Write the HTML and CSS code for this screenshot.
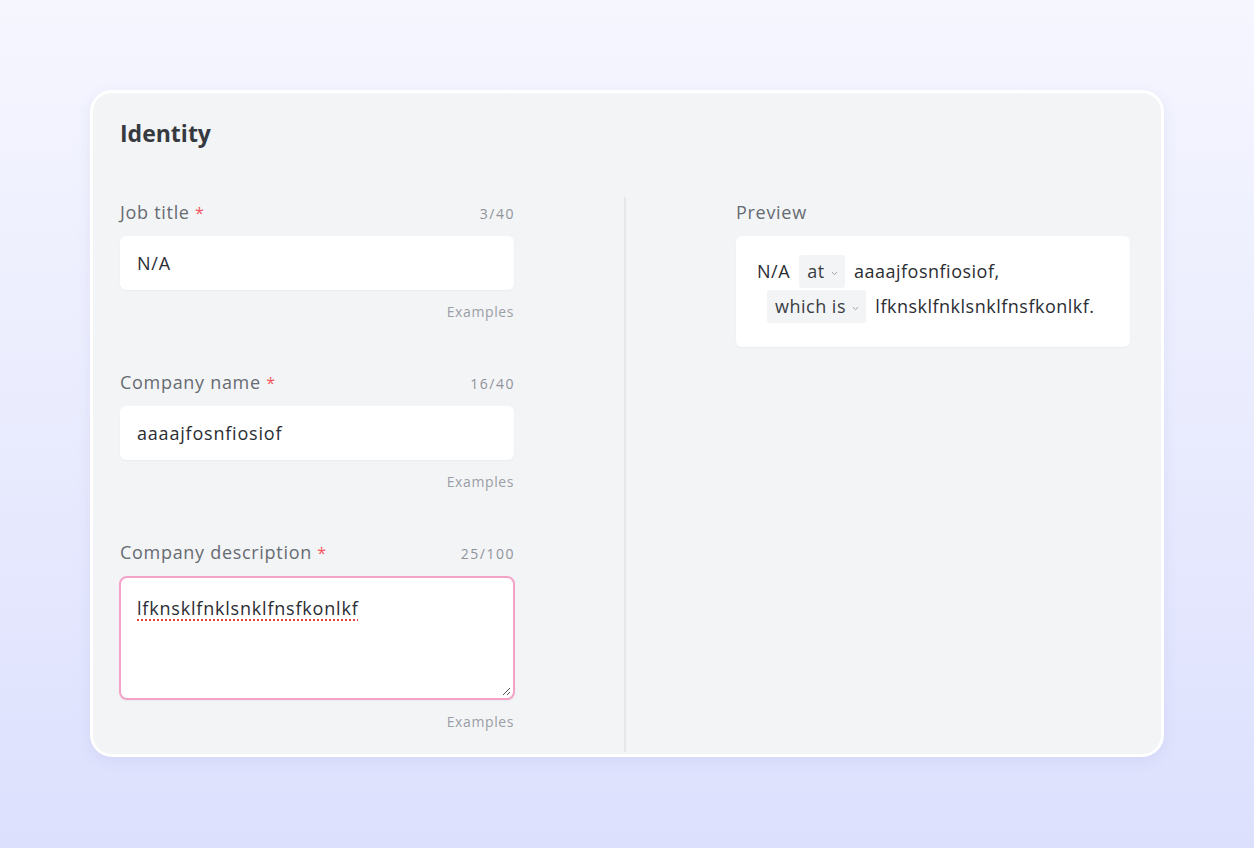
FILE: index.html
```html
<!DOCTYPE html>
<html>
	<head>
		<meta charset="UTF-8">
		<title>Identity</title>
		<link rel="stylesheet" href="styles.css">
	</head>
	<body>
		<div class="card">
			<h2 class="title">Identity</h2>
			<div class="columns">
				<div class="form">
					<div class="field">
						<div class="field-head">
							<label>Job title <span class="req">*</span></label>
							<span class="count">3/40</span>
						</div>
						<div class="input">N/A</div>
						<div class="examples">Examples</div>
					</div>
					<div class="field">
						<div class="field-head">
							<label>Company name <span class="req">*</span></label>
							<span class="count">16/40</span>
						</div>
						<div class="input">aaaajfosnfiosiof</div>
						<div class="examples">Examples</div>
					</div>
					<div class="field">
						<div class="field-head">
							<label>Company description <span class="req">*</span></label>
							<span class="count">25/100</span>
						</div>
						<div class="input area"><span class="typo">lfknsklfnklsnklfnsfkonlkf</span>
							<svg class="grip" width="9" height="9" viewBox="0 0 9 9"><path d="M8 1L1 8M8 5L5 8" stroke="#555" stroke-width="1" fill="none"/></svg>
						</div>
						<div class="examples">Examples</div>
					</div>
				</div>
				<div class="divider"></div>
				<div class="preview">
					<label>Preview</label>
					<div class="preview-box">
						<div class="line">N/A <span class="chip">at <svg width="7" height="5" viewBox="0 0 7 5"><path d="M1 1.2L3.5 3.6L6 1.2" stroke="#9ca3af" stroke-width="1" fill="none"/></svg></span> aaaajfosnfiosiof,</div>
						<div class="line"><span class="chip">which is <svg width="7" height="5" viewBox="0 0 7 5"><path d="M1 1.2L3.5 3.6L6 1.2" stroke="#9ca3af" stroke-width="1" fill="none"/></svg></span> lfknsklfnklsnklfnsfkonlkf.</div>
					</div>
				</div>
			</div>
		</div>
	</body>
</html>
```

FILE: styles.css
```css
* {
	margin: 0;
	padding: 0;
	box-sizing: border-box;
}

body {
	width: 1254px;
	height: 848px;
	background: linear-gradient(180deg, #f5f6fe 0%, #eceefe 40%, #dce0fd 100%);
	font-family: "Open Sans", "Liberation Sans", sans-serif;
	font-variant-ligatures: none;
	padding-top: 90px;
	overflow: hidden;
}

.card {
	width: 1074px;
	height: 667px;
	margin: 0 auto;
	background: #f3f4f6;
	border: 3px solid #ffffff;
	border-radius: 22px;
	box-shadow: 0 4px 14px rgba(120, 130, 200, 0.12);
	padding: 25px 0 0 27px;
	display: flex;
	flex-direction: column;
}

.title {
	font-size: 23px;
	font-weight: 700;
	color: #363a40;
	line-height: 30px;
}

.columns {
	display: flex;
	flex: 1;
	min-height: 0;
	margin-top: 49px;
}

.form {
	width: 394px;
	padding-top: 5px;
}

.field {
	margin-bottom: 52px;
}

.field:last-child {
	margin-bottom: 0;
}

.field-head {
	display: flex;
	justify-content: space-between;
	align-items: baseline;
	height: 20px;
	margin-bottom: 14px;
}

label {
	font-size: 18px;
	color: #676b72;
	line-height: 20px;
	letter-spacing: 0.7px;
}

.req {
	color: #f2545b;
	font-size: 16px;
}

.count {
	font-size: 14px;
	color: #8f939a;
	letter-spacing: 1.5px;
	margin-right: -1px;
}

.input {
	height: 54px;
	background: #ffffff;
	border-radius: 6px;
	box-shadow: 0 1px 2px rgba(0, 0, 0, 0.04);
	padding: 0 17px;
	font-size: 18px;
	letter-spacing: 0.8px;
	color: #2a2d33;
	line-height: 54px;
}

.input.area {
	height: 124px;
	margin: 0 -1px;
	border: 2px solid #f4a3c8;
	border-radius: 8px;
	line-height: 20px;
	padding: 20px 16px;
	position: relative;
}

.typo {
	text-decoration: underline dotted #e0453f;
	text-decoration-thickness: 2px;
	text-underline-offset: 4px;
}

.grip {
	position: absolute;
	right: 2px;
	bottom: 2px;
}

.examples {
	text-align: right;
	font-size: 14px;
	letter-spacing: 0.6px;
	color: #9a9ea5;
	margin-top: 14px;
	line-height: 16px;
}

.divider {
	width: 2px;
	background: #e6e7ea;
	margin: 0 110px 2px 110px;
}

.preview {
	width: 394px;
	padding-top: 5px;
}

.preview label {
	display: block;
	margin-bottom: 14px;
}

.preview-box {
	background: #ffffff;
	border-radius: 6px;
	box-shadow: 0 1px 2px rgba(0, 0, 0, 0.04);
	padding: 19px 20px 22px 21px;
	font-size: 18px;
	letter-spacing: 0.5px;
	color: #2a2d33;
}

.line {
	height: 35px;
	line-height: 33px;
	white-space: nowrap;
}

.line + .line {
	padding-left: 6px;
}

.chip {
	display: inline-block;
	background: #f3f4f6;
	border-radius: 3px;
	padding: 0 7px 0 8px;
	margin: 0 4px;
	height: 33px;
	line-height: 33px;
	color: #3a3d43;
}

.chip svg {
	vertical-align: middle;
	margin-left: 1px;
}
```
